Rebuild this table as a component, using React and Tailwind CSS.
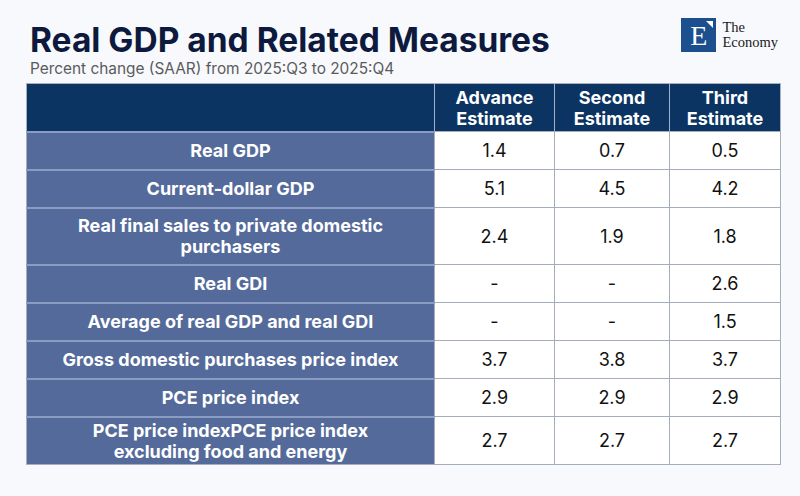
import React from 'react';

const ROWS = [
  { label: ['Real GDP'], values: ['1.4', '0.7', '0.5'], h: 'h-[38px]' },
  { label: ['Current-dollar GDP'], values: ['5.1', '4.5', '4.2'], h: 'h-[38px]' },
  { label: ['Real final sales to private domestic', 'purchasers'], values: ['2.4', '1.9', '1.8'], h: 'h-[57px]' },
  { label: ['Real GDI'], values: ['-', '-', '2.6'], h: 'h-[38px]' },
  { label: ['Average of real GDP and real GDI'], values: ['-', '-', '1.5'], h: 'h-[38px]' },
  { label: ['Gross domestic purchases price index'], values: ['3.7', '3.8', '3.7'], h: 'h-[38px]' },
  { label: ['PCE price index'], values: ['2.9', '2.9', '2.9'], h: 'h-[38px]' },
  { label: ['PCE price indexPCE price index', 'excluding food and energy'], values: ['2.7', '2.7', '2.7'], h: 'h-[48px]' },
];

const HEADERS = [
  ['Advance', 'Estimate'],
  ['Second', 'Estimate'],
  ['Third', 'Estimate'],
];

function Logo() {
  return (
    <div className="flex items-center gap-[6px]">
      <div className="relative w-[35px] h-[34px] bg-[#1b4f8d] flex items-center justify-center">
        <span className="text-white text-[28px] leading-none font-['Liberation_Serif',serif] mt-[2px]">E</span>
        <svg className="absolute top-[3px] right-[3px]" width="7" height="7" viewBox="0 0 7 7">
          <polygon points="0,0 7,0 7,7" fill="#fff" />
        </svg>
      </div>
      <div className="font-['Liberation_Serif',serif] text-[14.5px] leading-[15px] text-[#1a1a1a]">
        <div>The</div>
        <div>Economy</div>
      </div>
    </div>
  );
}

export default function App() {
  return (
    <div className="w-[800px] h-[496px] bg-[#f8f9fd] font-['Inter',sans-serif] overflow-hidden">
      <div className="flex justify-between items-start pl-[30px] pr-[22px] pt-[24px]">
        <div>
          <h1 className="text-[33.5px] leading-[33px] font-bold text-[#0d1a3d]">Real GDP and Related Measures</h1>
          <p className="mt-[3px] text-[15.4px] leading-[18px] text-[#5b5b5b]">Percent change (SAAR) from 2025:Q3 to 2025:Q4</p>
        </div>
        <div className="-mt-[6px]">
          <Logo />
        </div>
      </div>

      <table className="ml-[26px] mt-[5px] w-[754px] border-collapse table-fixed border border-[#a7afbd]">
        <colgroup>
          <col className="w-[408px]" />
          <col className="w-[120px]" />
          <col className="w-[115px]" />
          <col className="w-[111px]" />
        </colgroup>
        <thead>
          <tr className="h-[48px] bg-[#0b3462]">
            <th className="border-r border-[#a3b1c8]"></th>
            {HEADERS.map((h, i) => (
              <th key={i} className="border-r border-[#a3b1c8] text-white text-[18px] leading-[21px] font-bold text-center">
                {h.map(l => <div key={l}>{l}</div>)}
              </th>
            ))}
          </tr>
        </thead>
        <tbody>
          {ROWS.map((row, i) => (
            <tr key={i} className={row.h}>
              <td className="bg-[#546a9a] border-t-2 border-[#8b9cc2] border-r border-r-[#a7afbd] text-white text-[18px] leading-[21px] font-bold text-center px-2">
                {row.label.map(l => <div key={l}>{l}</div>)}
              </td>
              {row.values.map((v, j) => (
                <td key={j} className="bg-white border border-[#a4adbb] text-[#111] text-[18px] text-center">
                  {v}
                </td>
              ))}
            </tr>
          ))}
        </tbody>
      </table>
    </div>
  );
}
